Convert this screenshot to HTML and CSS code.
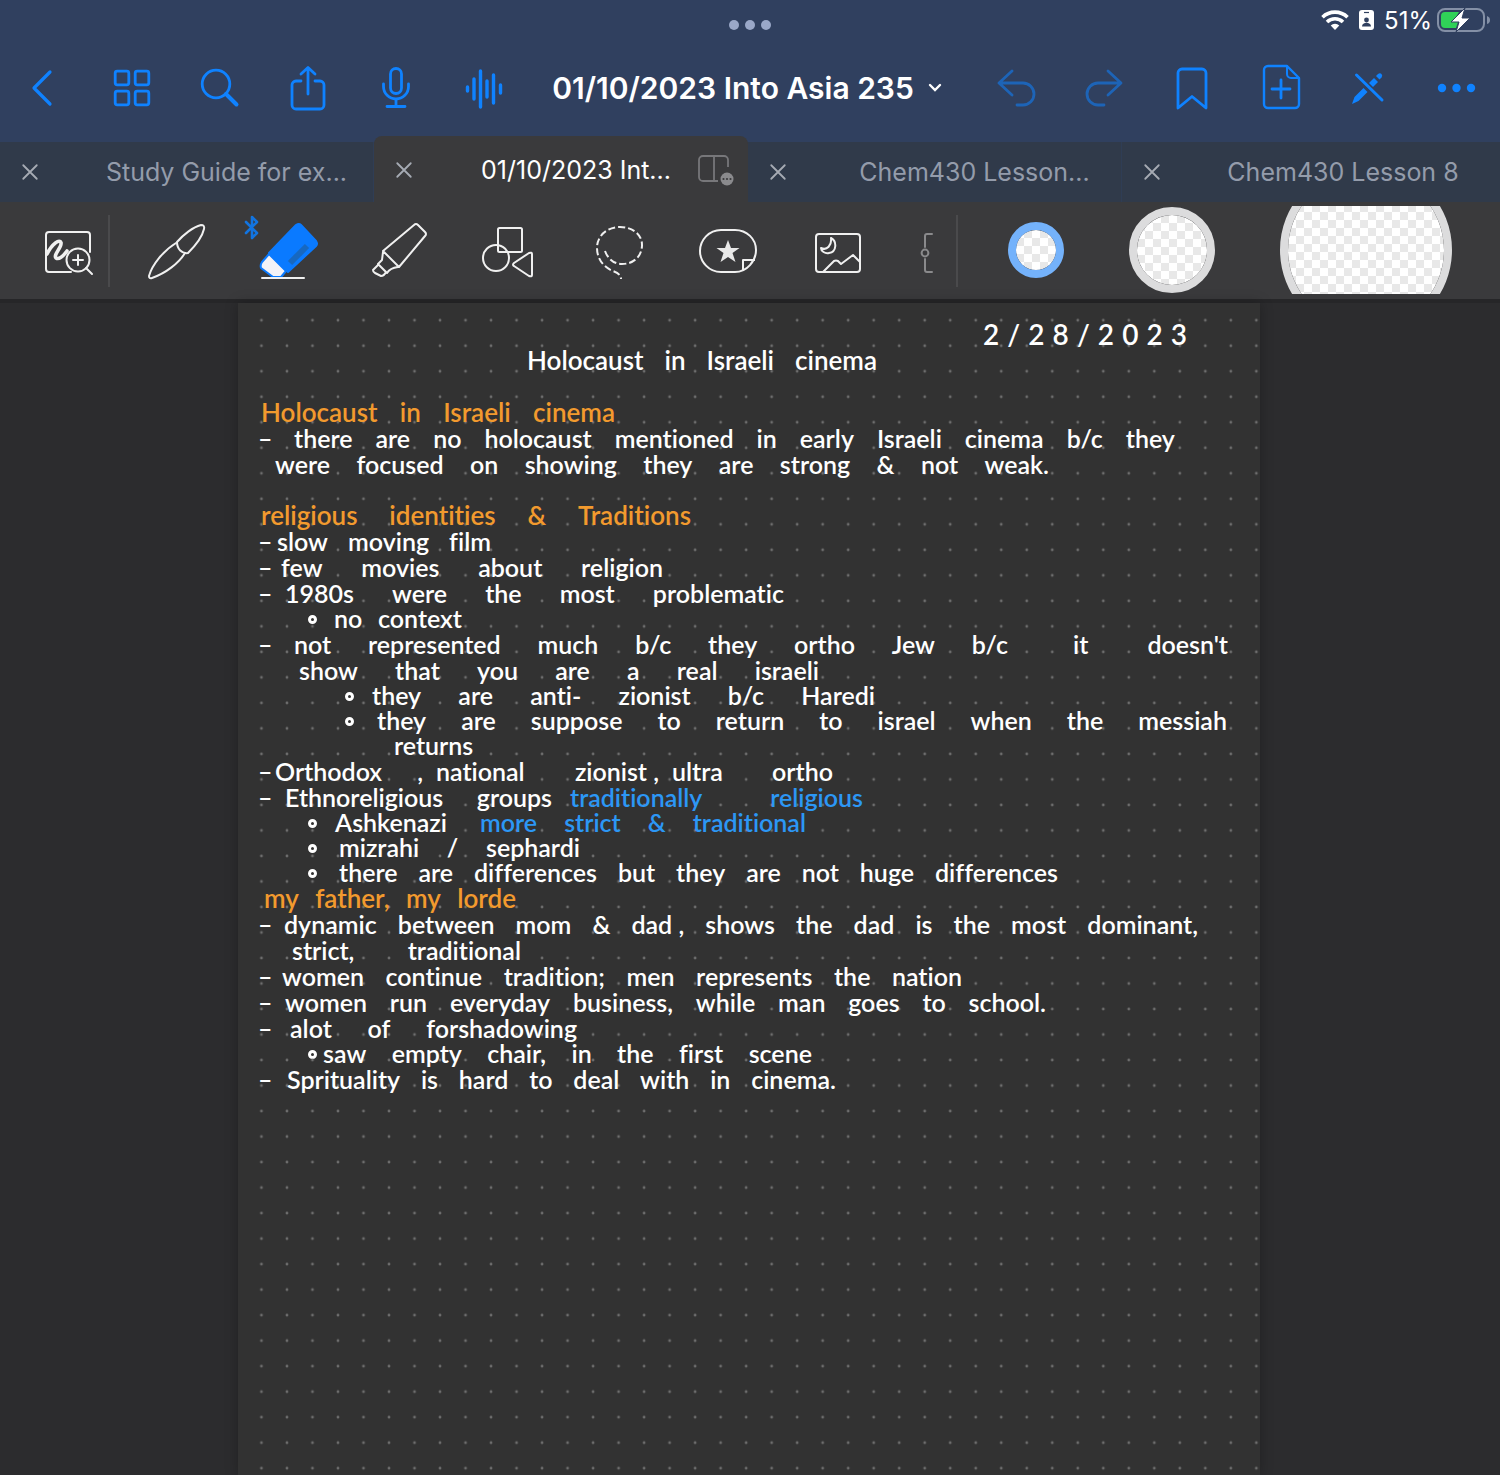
FILE: index.html
```html
<!DOCTYPE html>
<html lang="en">
<head>
<meta charset="utf-8">
<meta name="viewport" content="width=device-width, initial-scale=1">
<title>01/10/2023 Into Asia 235</title>
<link rel="stylesheet" href="styles.css">
</head>
<body>
<header class="header">
  <div class="status">
    <button class="multitask" aria-label="Multitasking"><i></i><i></i><i></i></button>
    <div class="status-right">
      <svg width="28" height="20" viewBox="0 0 28 20"><g fill="none" stroke="#fff" stroke-width="3.6"><path d="M1.5 7.2a18 18 0 0 1 25 0"/><path d="M6 12a11.500 11.500 0 0 1 16 0"/></g><path d="M14 20l-4.300-4.400a6.200 6.200 0 0 1 8.600 0z" fill="#fff"/></svg>
      <svg width="15" height="20" viewBox="0 0 15 20"><rect width="15" height="20" rx="3" fill="#fff"/><path d="M5 2.500h5" stroke="#30405f" stroke-width="1.200"/><circle cx="7.500" cy="10" r="2.400" fill="#30405f"/><path d="M3 16.500c0-5 9-5 9 0z" fill="#30405f"/></svg>
      <span>51%</span>
      <svg class="battery" width="54" height="26" viewBox="0 0 54 26"><rect x="1" y="2" width="46" height="22" rx="7" fill="none" stroke="#8490a6" stroke-width="2"/><path d="M50 9v8q3-1 3-4t-3-4z" fill="#8490a6"/><path d="M8 5h14l-6 10h5l-2 6H8a4 4 0 0 1-4-4V9a4 4 0 0 1 4-4z" fill="#30d158"/><path d="M28 1L14 15h8l-3 10L33 11h-8z" fill="#fff" stroke="#30405f" stroke-width="1"/></svg>
    </div>
  </div>
  <nav class="nav">
    <div class="group">
      <button aria-label="Back"><svg viewBox="0 0 56 56"><path d="M34 12L18 28l16 16" stroke-width="3.200"/></svg></button>
      <button aria-label="Thumbnails"><svg viewBox="0 0 56 56"><rect x="11.200" y="11.200" width="13.600" height="13.600" rx="2"/><rect x="31.200" y="11.200" width="13.600" height="13.600" rx="2"/><rect x="11.200" y="31.200" width="13.600" height="13.600" rx="2"/><rect x="31.200" y="31.200" width="13.600" height="13.600" rx="2"/></svg></button>
      <button aria-label="Search"><svg viewBox="0 0 56 56"><circle cx="24" cy="24" r="13.800"/><path d="M34 34l10.500 10.500" stroke-width="4"/></svg></button>
      <button aria-label="Share"><svg viewBox="0 0 56 56"><path d="M21 21h-5a4 4 0 0 0-4 4v20a4 4 0 0 0 4 4h24a4 4 0 0 0 4-4V25a4 4 0 0 0-4-4h-5M28 34V8M21 14l7-6.500 7 6.500"/></svg></button>
      <button aria-label="Record"><svg viewBox="0 0 56 56"><rect x="22.500" y="8.500" width="11" height="25" rx="5.500"/><path d="M15.500 24v2.500a12.500 12.500 0 0 0 25 0V24M28 39v7M19 46.500h18"/></svg></button>
      <button aria-label="Audio"><svg viewBox="0 0 56 56"><path stroke-width="3.400" d="M11.500 27v4M18 19v20M24.500 11v36M31 21v16M37.500 15v28M44.500 25v8"/></svg></button>
    </div>
    <button class="doc-title">01/10/2023 Into Asia 235<svg width="14" height="10" viewBox="0 0 14 10"><path d="M2 2l5 5 5-5"/></svg></button>
    <div class="group">
      <button aria-label="Undo" disabled><svg viewBox="0 0 56 56"><path d="M24 11L11 23l13 12M12 23h23a11 11 0 0 1 0 22h-6"/></svg></button>
      <button aria-label="Redo" disabled><svg viewBox="0 0 56 56"><path d="M32 11l13 12-13 12M44 23H22a11 11 0 0 0 0 22h6"/></svg></button>
      <button aria-label="Bookmark"><svg viewBox="0 0 56 56"><path d="M14 48V13a4 4 0 0 1 4-4h20a4 4 0 0 1 4 4v35L28 36.500z"/></svg></button>
      <button aria-label="Add page"><svg viewBox="0 0 56 56"><path d="M35 6H16a4 4 0 0 0-4 4v34a4 4 0 0 0 4 4h27a4 4 0 0 0 4-4V18z" stroke-width="2.400"/><path d="M35 6v8a4 4 0 0 0 4 4h8" stroke-width="2"/><path d="M29 20v18M20 29h18"/></svg></button>
      <button aria-label="Read-only mode"><svg viewBox="0 0 56 56"><path d="M16.500 15L42 40" stroke-width="3"/><g fill="#0f82ff" stroke="none"><path d="M12 44l2.500-7 9-9 4 4-9 9z"/><path d="M29 23l5-5 4 4-5 5z"/><path d="M36 16l2-2q2-1.500 3.500 0t0 3.500l-2 2z"/></g></svg></button>
      <button aria-label="More"><svg viewBox="0 0 56 56"><g fill="#0f82ff" stroke="none"><circle cx="14" cy="28" r="4.200"/><circle cx="28.500" cy="28" r="4.200"/><circle cx="43" cy="28" r="4.200"/></g></svg></button>
    </div>
  </nav>
  <div class="tabs">
    <div class="tab"><button class="close" aria-label="Close tab"><svg viewBox="0 0 16 16"><path d="M2 2l12 12M14 2L2 14"/></svg></button><a href="#study">Study Guide for ex...</a></div>
    <div class="tab active"><button class="close" aria-label="Close tab"><svg viewBox="0 0 16 16"><path d="M2 2l12 12M14 2L2 14"/></svg></button><a href="#asia">01/10/2023 Int...</a><button class="split" aria-label="Split view"><svg width="36" height="32" viewBox="0 0 36 32"><path d="M30 13V6a4 4 0 0 0-4-4H5a4 4 0 0 0-4 4v17a4 4 0 0 0 4 4h15M16 2v25" fill="none" stroke="#77777a" stroke-width="1.800"/><circle cx="29" cy="25" r="6.500" fill="#8a8a8d"/><g fill="#3a3a3c"><circle cx="25.500" cy="25" r="1.100"/><circle cx="29" cy="25" r="1.100"/><circle cx="32.500" cy="25" r="1.100"/></g></svg></button></div>
    <div class="tab"><button class="close" aria-label="Close tab"><svg viewBox="0 0 16 16"><path d="M2 2l12 12M14 2L2 14"/></svg></button><a href="#chem">Chem430 Lesson...</a></div>
    <div class="tab"><button class="close" aria-label="Close tab"><svg viewBox="0 0 16 16"><path d="M2 2l12 12M14 2L2 14"/></svg></button><a href="#chem8">Chem430 Lesson 8</a></div>
  </div>
</header>
<div class="toolbar">
  <div class="zoom"><button aria-label="Zoom window"><svg viewBox="0 0 64 64"><path d="M35 53H13a3 3 0 0 1-3-3V16a3 3 0 0 1 3-3h38a3 3 0 0 1 3 3v17"/><path d="M11 35c5-10 13-16 14-11 1 4-8 12-5 15 3 2 8-3 11-7" stroke-width="3.600"/><circle cx="42" cy="41" r="11.500"/><path d="M50 49l6 6M42 36v10M37 41h10"/></svg></button></div>
  <div class="tools">
    <button aria-label="Pen"><svg viewBox="0 0 64 64"><path d="M31 24C18 32 7 46 4 57q0 3 3 2c14-5 27-15 33-25"/><path d="M32 23C38 16 48 8 56 6q4 0 3 4c-2 9-9 17-16 24-6 1-11-4-11-11z"/></svg></button>
    <button aria-label="Eraser"><svg viewBox="0 0 64 64"><path d="M14 35l17 17-5 6h-8L6 49q-1-3 1-6z" fill="#f2f2f7" stroke="#0a7aff"/><path d="M41 6q3-2 5 0l15 16q2 3 0 5L33 53 14 34z" fill="#0a7aff" stroke="#0a7aff"/><path d="M52 27L35 44" stroke="#1768c0" stroke-width="6" stroke-linecap="butt"/><path d="M7 59h42"/><path d="M-9 3L2 14l-5 5V-2l5 5L-9 14" stroke="#1274e0" stroke-width="2.600"/></svg></button>
    <button aria-label="Highlighter"><svg viewBox="0 0 64 64"><path d="M49 6q2-2 4 0l7 7q2 2 0 4L34 48 18 32zM18 33l-1 8-4 4 9 9q3-5 11-6M13 46l-5 5q0 2 2 3l6 3q3 0 5-4"/></svg></button>
    <button aria-label="Shapes"><svg viewBox="0 0 64 64"><rect x="23" y="9" width="24" height="24" rx="1.500"/><circle cx="21" cy="39" r="13"/><path d="M39 44l15-10q3-1 3 1v21q0 2-3 1L39 47q-2-1 0-3z"/></svg></button>
    <button aria-label="Lasso"><svg viewBox="0 0 64 64"><path stroke-linecap="butt" stroke-dasharray="7 3" d="M20 32c3 8 9 13 17 13 12 0 20-8 20-19S47 8 35 8 12 16 12 29c0 12 8 20 16 23 6 2 8 5 8 8"/></svg></button>
    <button aria-label="Elements"><svg viewBox="0 0 64 64"><path d="M26 11h14c12 0 21 9 21 20s-9 22-21 22H26C14 53 5 43 5 32s9-21 21-21z"/><path d="M33 21l3 8h8.500l-7 5 3 9L33 38l-7.500 5 3-9-7-5H30z" fill="#e8e8e8" stroke="none"/><path d="M48 51V41h12" stroke-linecap="butt"/></svg></button>
    <button aria-label="Image"><svg viewBox="0 0 64 64"><rect x="11" y="15" width="44" height="38" rx="3"/><path d="M26 19c6 3 6 14-2 15-4 1-8-2-8-5 6 3 11-3 10-10zM18 53l11-11q2-1 4 0l3 3 12-9 7 7"/></svg></button>
    <button class="cut" aria-label="Ruler"><svg viewBox="0 0 64 64"><g stroke="#8a8a8c"><path d="M40 15h-5a2 2 0 0 0-2 2v11M33 40v11a2 2 0 0 0 2 2h5"/><circle cx="33" cy="34" r="3.400"/></g></svg></button>
  </div>
  <div class="sizes">
    <button class="size small" aria-label="Small eraser"></button>
    <button class="size medium" aria-label="Medium eraser"></button>
    <button class="clip" aria-label="Large eraser"><span class="size large"></span></button>
  </div>
</div>
<main class="desk">
  <article class="paper">
    <svg class="dots" width="100%" height="100%"><defs><pattern id="dot" x="10.700" y="4.500" width="25.510" height="25.510" patternUnits="userSpaceOnUse"><circle cx="12.750" cy="12.750" r="1.400" fill="#6e6e6e"/></pattern></defs><rect x="20" y="14" width="100%" height="100%" fill="url(#dot)"/></svg>
    <p class="date"><span>2</span><span>/</span><span>2</span><span>8</span><span>/</span><span>2</span><span>0</span><span>2</span><span>3</span></p>
    <h1 class="line" style="--x:269px;--w:350px"><span>Holocaust</span> <span>in</span> <span>Israeli</span> <span>cinema</span></h1>
    <section>
      <h2 class="line" style="--x:3px;--w:354px"><span>Holocaust</span> <span>in</span> <span>Israeli</span> <span>cinema</span></h2>
      <ul>
        <li><p class="line" style="--x:36px;--w:881px"><span>there</span> <span>are</span> <span>no</span> <span>holocaust</span> <span>mentioned</span> <span>in</span> <span>early</span> <span>Israeli</span> <span>cinema</span> <span>b/c</span> <span>they</span></p>
        <p class="line" style="--x:17px;--w:774px"><span>were</span> <span>focused</span> <span>on</span> <span>showing</span> <span>they</span> <span>are</span> <span>strong</span> <span>&amp;</span> <span>not</span> <span>weak.</span></p></li>
      </ul>
    </section>
    <section>
      <h2 class="line" style="--x:3px;--w:430px"><span>religious</span> <span>identities</span> <span>&amp;</span> <span>Traditions</span></h2>
      <ul>
        <li><p class="line" style="--x:19px;--w:214px"><span>slow</span> <span>moving</span> <span>film</span></p></li>
        <li><p class="line" style="--x:23px;--w:382px"><span>few</span> <span>movies</span> <span>about</span> <span>religion</span></p></li>
        <li><p class="line" style="--x:27px;--w:499px"><span>1980s</span> <span>were</span> <span>the</span> <span>most</span> <span>problematic</span></p>
          <ul class="near"><li><p class="line" style="--x:25px;--w:128px"><span>no</span> <span>context</span></p></li></ul></li>
        <li><p class="line" style="--x:36px;--w:934px"><span class="phrase" style="--w:714px"><span>not</span> <span>represented</span> <span>much</span> <span>b/c</span> <span>they</span> <span>ortho</span> <span>Jew</span> <span>b/c</span></span> <span class="phrase" style="--w:155px"><span>it</span> <span>doesn't</span></span></p>
          <p class="line" style="--x:41px;--w:520px"><span>show</span> <span>that</span> <span>you</span> <span>are</span> <span>a</span> <span>real</span> <span>israeli</span></p>
          <ul class="far">
            <li><p class="line" style="--x:28px;--w:503px"><span>they</span> <span>are</span> <span>anti-</span> <span>zionist</span> <span>b/c</span> <span>Haredi</span></p></li>
            <li><p class="line" style="--x:33px;--w:850px"><span>they</span> <span>are</span> <span>suppose</span> <span>to</span> <span>return</span> <span>to</span> <span>israel</span> <span>when</span> <span>the</span> <span>messiah</span></p>
            <p class="line" style="--x:50px;--w:95px"><span>returns</span></p></li>
          </ul></li>
        <li><p class="line" style="--x:17px;--w:558px"><span class="phrase" style="--w:148px"><span>Orthodox</span> <span>,</span></span> <span class="phrase" style="--w:223px"><span>national</span> <span>zionist ,</span></span> <span class="phrase" style="--w:161px"><span>ultra</span> <span>ortho</span></span></p></li>
        <li><p class="line" style="--x:27px;--w:578px"><span class="phrase" style="--w:267px"><span>Ethnoreligious</span> <span>groups</span></span> <em class="phrase" style="--w:293px"><span>traditionally</span> <span>religious</span></em></p>
          <ul class="near">
            <li><p class="line" style="--x:26px;--w:471px"><span>Ashkenazi</span> <em class="phrase" style="--w:326px"><span>more</span> <span>strict</span> <span>&amp;</span> <span>traditional</span></em></p></li>
            <li><p class="line" style="--x:30px;--w:241px"><span>mizrahi</span> <span>/</span> <span>sephardi</span></p></li>
            <li><p class="line" style="--x:30px;--w:719px"><span>there</span> <span>are</span> <span>differences</span> <span>but</span> <span>they</span> <span>are</span> <span>not</span> <span>huge</span> <span>differences</span></p></li>
          </ul></li>
      </ul>
    </section>
    <section>
      <h2 class="line" style="--x:6px;--w:252px"><span>my</span> <span>father,</span> <span>my</span> <span>lorde</span></h2>
      <ul>
        <li><p class="line" style="--x:26px;--w:914px"><span>dynamic</span> <span>between</span> <span>mom</span> <span>&amp;</span> <span>dad ,</span> <span>shows</span> <span>the</span> <span>dad</span> <span>is</span> <span>the</span> <span>most</span> <span>dominant,</span></p>
          <p class="line" style="--x:34px;--w:229px"><span>strict,</span> <span>traditional</span></p></li>
        <li><p class="line" style="--x:24px;--w:680px"><span>women</span> <span>continue</span> <span>tradition;</span> <span>men</span> <span>represents</span> <span>the</span> <span>nation</span></p></li>
        <li><p class="line" style="--x:27px;--w:761px"><span>women</span> <span>run</span> <span>everyday</span> <span>business,</span> <span>while</span> <span>man</span> <span>goes</span> <span>to</span> <span>school.</span></p></li>
        <li><p class="line" style="--x:32px;--w:287px"><span>alot</span> <span>of</span> <span>forshadowing</span></p>
          <ul class="near"><li><p class="line" style="--x:14px;--w:489px"><span>saw</span> <span>empty</span> <span>chair,</span> <span>in</span> <span>the</span> <span>first</span> <span>scene</span></p></li></ul></li>
        <li><p class="line" style="--x:29px;--w:549px"><span>Sprituality</span> <span>is</span> <span>hard</span> <span>to</span> <span>deal</span> <span>with</span> <span>in</span> <span>cinema.</span></p></li>
      </ul>
    </section>
  </article>
</main>
</body>
</html>
```
FILE: styles.css
```css
*, ::before { box-sizing: border-box; }
body {
  margin: 0;
  min-height: 100vh;
  display: flex;
  flex-direction: column;
  overflow-x: hidden;
  background: #2c2c2e;
  color: #fff;
  font-family: Inter, "Liberation Sans", sans-serif;
}
button {
  margin: 0;
  padding: 0;
  border: 0;
  background: none;
  color: inherit;
  font: inherit;
}
svg { display: block; flex: none; }
p, h1, h2, ul { margin: 0; padding: 0; }
ul { list-style: none; }

/* Header */
.header { background: #30405f; }
.status {
  height: 44px;
  display: grid;
  grid-template-columns: 1fr auto 1fr;
}
.multitask {
  grid-column: 2;
  display: flex;
  gap: 6px;
  align-items: center;
  padding-top: 6px;
}
.multitask i { width: 10px; height: 10px; border-radius: 50%; background: #9aa8c8; }
.status-right {
  display: flex;
  justify-content: flex-end;
  align-items: center;
  gap: 10px;
  height: 40px;
  padding-right: 9px;
  font-size: 24px;
}
.battery { margin-left: -5px; }
.nav {
  height: 92px;
  display: flex;
  justify-content: space-between;
  align-items: center;
  padding-bottom: 4px;
}
.group { display: flex; }
.group button { width: 88px; display: grid; place-items: center; }
.group svg {
  width: 56px;
  height: 56px;
  fill: none;
  stroke: #0f82ff;
  stroke-width: 2.8;
  stroke-linecap: round;
  stroke-linejoin: round;
}
.group button:disabled { opacity: .55; }
.doc-title {
  display: flex;
  align-items: center;
  gap: 14px;
  padding-right: 6px;
  font-size: 30px;
  font-weight: 600;
  white-space: nowrap;
}
.doc-title path { fill: none; stroke: #fff; stroke-width: 2.4; stroke-linecap: round; }

/* Tabs */
.tabs {
  display: grid;
  grid-template-columns: repeat(4, 1fr);
  align-items: end;
  padding-right: 4px;
  background: linear-gradient(#30405f 6px, #303a4a 6px);
}
.tab {
  height: 60px;
  display: flex;
  align-items: center;
  border-right: 1px solid #2f3d55;
  color: #949cab;
  font-size: 25px;
}
.tab.active {
  height: 66px;
  padding-top: 2px;
  border: 0;
  border-radius: 8px 8px 0 0;
  background: #3a3a3c;
  color: #fff;
}
.tab a {
  flex: 1;
  padding-left: 20px;
  color: inherit;
  text-align: center;
  text-decoration: none;
  white-space: nowrap;
}
.tab:last-child { border: 0; }
.tab:last-child a { padding-left: 8px; }
.close { width: 60px; display: grid; place-items: center; }
.close svg { width: 18px; height: 18px; stroke: #a6abb4; stroke-width: 1.6; stroke-linecap: round; }
.split { width: 50px; }

/* Tool bar */
.toolbar {
  height: 97px;
  display: flex;
  align-items: center;
  background: #3a3a3c;
}
.toolbar svg {
  width: 64px;
  height: 64px;
  overflow: visible;
  fill: none;
  stroke: #f0f0f0;
  stroke-width: 2;
  stroke-linecap: round;
  stroke-linejoin: round;
}
.zoom {
  width: 110px;
  height: 72px;
  display: flex;
  align-items: center;
  padding-left: 36px;
  border-right: 2px solid #4a4a4c;
}
.tools {
  height: 72px;
  display: flex;
  align-items: center;
  padding-left: 12px;
  border-right: 2px solid #4a4a4c;
}
.tools button { width: 110px; display: grid; place-items: center; }
.tools .cut { width: 64px; }
.sizes {
  flex: 1;
  display: flex;
  align-items: center;
  justify-content: space-between;
  padding: 0 48px 2px 50px;
}
.size {
  display: block;
  border: 8px solid #dcdcdd;
  border-radius: 50%;
  background: repeating-conic-gradient(#e8e8e8 0 25%, #fff 0 50%) padding-box 0 0 / 16px 16px;
}
.small { width: 56px; height: 56px; border-color: #74b2fb; }
.medium { width: 86px; height: 86px; }
.large { flex: none; width: 172px; height: 172px; }
.clip { width: 172px; height: 88px; display: flex; align-items: center; overflow: hidden; }

/* Note page */
.desk {
  flex: 1;
  display: flex;
  justify-content: center;
  padding-top: 4px;
  background: linear-gradient(#262628 4px, #2c2c2e 4px);
}
.paper {
  position: relative;
  width: 1022px;
  margin-right: 2px;
  padding: 18px 20px;
  background: #323232;
  box-shadow: 0 0 12px rgba(0, 0, 0, .25);
  font-family: Lato, "Liberation Sans", sans-serif;
  font-size: 25px;
  font-weight: 600;
  font-variant-ligatures: none;
  line-height: 26px;
}
.dots { position: absolute; inset: 0; }
.date {
  position: relative;
  width: 204px;
  height: 26px;
  margin-left: 725px;
  display: flex;
  justify-content: space-between;
  font-size: 28px;
}
.line {
  position: relative;
  display: flex;
  justify-content: space-between;
  width: var(--w);
  margin-left: var(--x);
  white-space: nowrap;
}
.phrase { display: flex; justify-content: space-between; width: var(--w); }
h1, h2 { font-size: 26px; font-weight: 600; line-height: 26px; }
h2 { color: #f29a2e; }
h1 { padding-bottom: 26px; }
section + section { padding-top: 25px; }
section:last-child { padding-top: 0; }
em { color: #2c97f5; font-style: normal; }
li { display: grid; grid-template-columns: 0 1fr; }
li > * { grid-column: 2; }
li::before { content: "–"; grid-column: 1; grid-row: 1; white-space: nowrap; }
li li { line-height: 25px; }
li li::before { content: ""; width: 9px; height: 9px; margin: 9px 0 0 1px; border: 3px solid #fff; border-radius: 50%; }
.near { margin-left: 49px; padding-right: 0; }
.near .line { left: 2px; }
.far { margin-left: 86px; }
```
